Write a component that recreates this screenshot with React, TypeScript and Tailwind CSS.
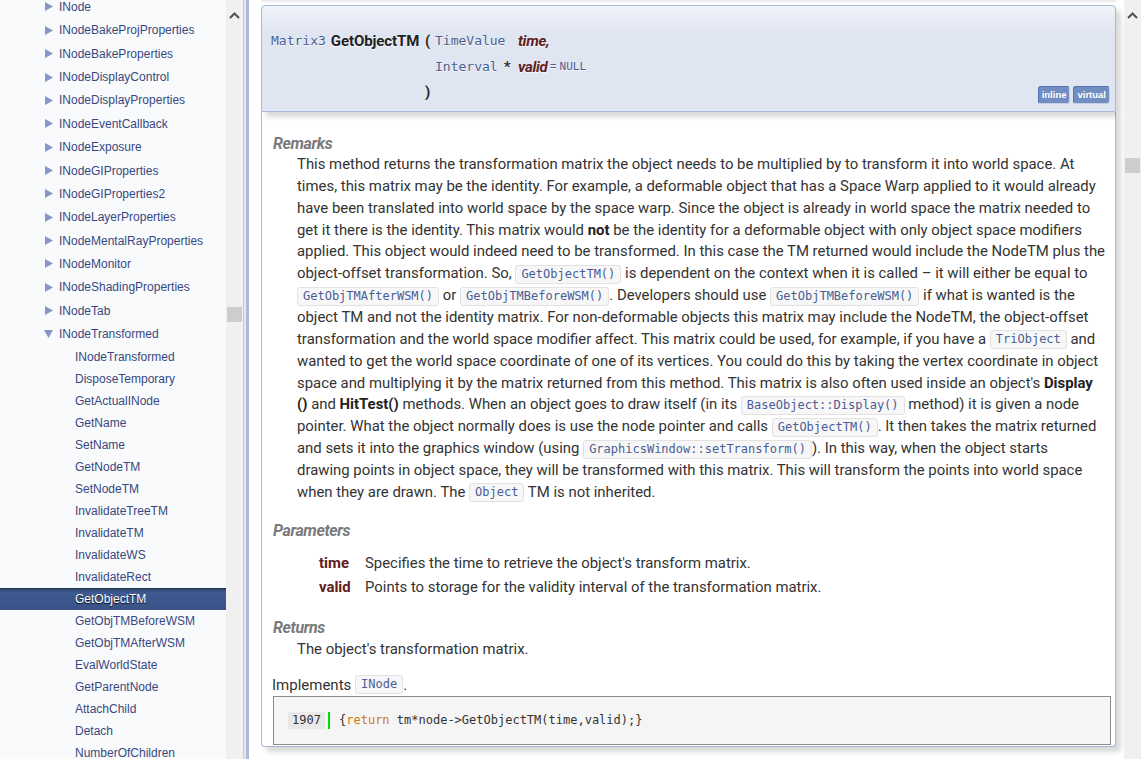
import React from "react";

const parents = [
  "INode",
  "INodeBakeProjProperties",
  "INodeBakeProperties",
  "INodeDisplayControl",
  "INodeDisplayProperties",
  "INodeEventCallback",
  "INodeExposure",
  "INodeGIProperties",
  "INodeGIProperties2",
  "INodeLayerProperties",
  "INodeMentalRayProperties",
  "INodeMonitor",
  "INodeShadingProperties",
  "INodeTab",
];

const children = [
  "INodeTransformed",
  "DisposeTemporary",
  "GetActualINode",
  "GetName",
  "SetName",
  "GetNodeTM",
  "SetNodeTM",
  "InvalidateTreeTM",
  "InvalidateTM",
  "InvalidateWS",
  "InvalidateRect",
  "GetObjectTM",
  "GetObjTMBeforeWSM",
  "GetObjTMAfterWSM",
  "EvalWorldState",
  "GetParentNode",
  "AttachChild",
  "Detach",
  "NumberOfChildren",
];

function C({ children }: { children: React.ReactNode }) {
  return (
    <code className="inline-block rounded-[3px] border border-[#e2e2e2] bg-[#f7f7f7] px-[5px] align-middle font-['DejaVu_Sans_Mono',monospace] text-[12px] leading-[17px] text-[#4a5d96]">
      {children}
    </code>
  );
}

function B({ children }: { children: React.ReactNode }) {
  return <b className="font-bold text-[#222]">{children}</b>;
}

function Chevron() {
  return (
    <svg width="11" height="7" viewBox="0 0 11 7" className="block">
      <polyline points="1,6 5.5,1.5 10,6" fill="none" stroke="#505050" strokeWidth="2" />
    </svg>
  );
}

function Scrollbar({ thumbTop }: { thumbTop: number }) {
  return (
    <div className="flex h-full w-[17px] shrink-0 flex-col items-center bg-[#f0f0f0]">
      <div className="mt-[12px]">
        <Chevron />
      </div>
      <div className="w-[15px] bg-[#cdcdcd]" style={{ marginTop: thumbTop - 19, height: 15 }} />
    </div>
  );
}

const lines: React.ReactNode[] = [
  <>This method returns the transformation matrix the object needs to be multiplied by to transform it into world space. At</>,
  <>times, this matrix may be the identity. For example, a deformable object that has a Space Warp applied to it would already</>,
  <>have been translated into world space by the space warp. Since the object is already in world space the matrix needed to</>,
  <>get it there is the identity. This matrix would <B>not</B> be the identity for a deformable object with only object space modifiers</>,
  <>applied. This object would indeed need to be transformed. In this case the TM returned would include the NodeTM plus the</>,
  <>object-offset transformation. So, <C>GetObjectTM()</C> is dependent on the context when it is called – it will either be equal to</>,
  <><C>GetObjTMAfterWSM()</C> or <C>GetObjTMBeforeWSM()</C>. Developers should use <C>GetObjTMBeforeWSM()</C> if what is wanted is the</>,
  <>object TM and not the identity matrix. For non-deformable objects this matrix may include the NodeTM, the object-offset</>,
  <>transformation and the world space modifier affect. This matrix could be used, for example, if you have a <C>TriObject</C> and</>,
  <>wanted to get the world space coordinate of one of its vertices. You could do this by taking the vertex coordinate in object</>,
  <>space and multiplying it by the matrix returned from this method. This matrix is also often used inside an object's <B>Display</B></>,
  <><B>()</B> and <B>HitTest()</B> methods. When an object goes to draw itself (in its <C>BaseObject::Display()</C> method) it is given a node</>,
  <>pointer. What the object normally does is use the node pointer and calls <C>GetObjectTM()</C>. It then takes the matrix returned</>,
  <>and sets it into the graphics window (using <C>GraphicsWindow::setTransform()</C>). In this way, when the object starts</>,
  <>drawing points in object space, they will be transformed with this matrix. This will transform the points into world space</>,
  <>when they are drawn. The <C>Object</C> TM is not inherited.</>,
];

function Heading({ children }: { children: React.ReactNode }) {
  return (
    <div className="h-[21px] pl-[11px] text-[16px] font-bold italic leading-[21px] tracking-[-0.4px] text-[#7a7a7a]">
      {children}
    </div>
  );
}

const badge =
  "rounded-[3px] border-t border-l border-t-[#5373b4] border-l-[#5373b4] border-r border-b border-r-[#c4cfe5] border-b-[#c4cfe5] bg-[#728dc1] px-[3px] py-[3px]";

export default function App() {
  const mono = "font-['DejaVu_Sans_Mono',monospace]";
  return (
    <div className="flex h-[759px] w-[1141px] overflow-hidden bg-white">
      {/* Sidebar */}
      <div className="h-full w-[226px] shrink-0 overflow-hidden bg-[#f9fafc] font-['Liberation_Sans',Arial,sans-serif] text-[12px] text-[#38487f]">
        <div className="mt-[-4.7px]">
          {parents.map((p) => (
            <div key={p} className="flex h-[23.36px] items-center pl-[45px]">
              <svg width="8" height="9" viewBox="0 0 8 9" className="shrink-0">
                <polygon points="0,0 8,4.5 0,9" fill="#8597c8" />
              </svg>
              <span className="ml-[6px] whitespace-nowrap">{p}</span>
            </div>
          ))}
          <div className="flex h-[23.36px] items-center pl-[44px]">
            <svg width="9" height="8" viewBox="0 0 9 8" className="shrink-0">
              <polygon points="0,0 9,0 4.5,8" fill="#8597c8" />
            </svg>
            <span className="ml-[6px] whitespace-nowrap">INodeTransformed</span>
          </div>
          {children.map((c) =>
            c === "GetObjectTM" ? (
              <div
                key={c}
                className="flex h-[22px] items-center bg-[linear-gradient(180deg,#1f2d4c_0px,#34507f_2px,#3e5a91_5px,#3a5387_100%)] pl-[75px] text-white [text-shadow:0_1px_1px_rgba(0,0,0,0.9)]"
              >
                {c}
              </div>
            ) : (
              <div key={c} className="flex h-[22px] items-center whitespace-nowrap pl-[75px]">
                {c}
              </div>
            )
          )}
        </div>
      </div>

      <Scrollbar thumbTop={307} />

      {/* splitter */}
      <div className="flex h-full w-[6px] shrink-0">
        <div className="w-[1px] bg-[#c6c8d0]" />
        <div className="w-[2px] bg-[#e2e8f4]" />
        <div className="w-[3px] bg-[#abbadb]" />
      </div>

      {/* Content */}
      <div className="h-full min-w-0 flex-1 overflow-hidden bg-white pr-[8px] pl-[12px] font-['Roboto',sans-serif] text-[#333]">
        <div className="h-[3px] bg-[linear-gradient(180deg,#e6e6e6,#ffffff)]" />
        <div className="mt-[2px]">
          {/* memproto */}
          <div className="relative h-[107px] rounded-t-[4px] border border-[#a8b8d9] bg-[linear-gradient(180deg,#f1f4f9_0px,#e7ecf5_14px,#dfe5f1_28px,#dfe5f1_100%)] pl-[9px] pr-[5px] shadow-[5px_5px_5px_rgba(0,0,0,0.15)] [text-shadow:0_1px_1px_rgba(255,255,255,0.9)]">
            <div className="flex h-full items-end justify-between pb-[6px]">
              <div className="grid grid-cols-[154px_10px_83px_auto] grid-rows-[26px_26px_25px] items-center">
                <div className="flex items-center whitespace-nowrap">
                  <span className={`${mono} text-[13px] text-[#4c5f8f]`}>Matrix3</span>
                  <span className="ml-[5px] text-[15px] font-bold tracking-[-0.1px] text-[#222]">GetObjectTM</span>
                </div>
                <div className="text-[15px] font-bold text-[#222]">(</div>
                <div className={`${mono} text-[13px] text-[#4c5f8f]`}>TimeValue</div>
                <div className="whitespace-nowrap text-[15px] font-bold italic tracking-[-0.3px] text-[#602020]">time,</div>

                <div />
                <div />
                <div className="flex items-center whitespace-nowrap">
                  <span className={`${mono} text-[13px] text-[#4c5f8f]`}>Interval</span>
                  <span className="ml-[6px] text-[15px] font-bold text-[#333]">*</span>
                </div>
                <div className="flex items-center whitespace-nowrap">
                  <span className="text-[15px] font-bold italic tracking-[-0.3px] text-[#602020]">valid</span>
                  <span className="ml-[2px] text-[13px] text-[#4c5f8f]">=</span>
                  <span className={`${mono} ml-[3px] text-[11px] text-[#4c5f8f]`}>NULL</span>
                </div>

                <div />
                <div className="text-[15px] font-bold text-[#222]">)</div>
                <div />
                <div />
              </div>
              <div className="mb-[1px] flex gap-[3px] font-['Liberation_Sans',Arial,sans-serif] text-[9.5px] font-bold leading-[10px] text-white [text-shadow:none]">
                <span className={badge}>inline</span>
                <span className={badge}>virtual</span>
              </div>
            </div>
          </div>

          {/* memdoc */}
          <div className="rounded-b-[4px] border border-t-0 border-[#a8b8d9] bg-white pt-[21px] pb-[1px] shadow-[5px_5px_5px_rgba(0,0,0,0.15)]">
            <Heading>Remarks</Heading>
            <div className="pl-[35px] text-[14.9px]">
              {lines.map((l, i) => (
                <div key={i} className="h-[21.87px] whitespace-nowrap leading-[21.87px]">
                  {l}
                </div>
              ))}
            </div>

            <div className="mt-[16px]">
              <Heading>Parameters</Heading>
            </div>
            <div className="mt-[10px] pl-[57px] text-[14.9px]">
              <div className="flex h-[24px] items-center">
                <span className="w-[46px] font-bold text-[#602020]">time</span>
                <span>Specifies the time to retrieve the object's transform matrix.</span>
              </div>
              <div className="flex h-[24px] items-center">
                <span className="w-[46px] font-bold text-[#602020]">valid</span>
                <span>Points to storage for the validity interval of the transformation matrix.</span>
              </div>
            </div>

            <div className="mt-[18px]">
              <Heading>Returns</Heading>
            </div>
            <div className="h-[22px] pl-[35px] text-[14.9px] leading-[22px]">The object's transformation matrix.</div>

            <div className="mt-[14px] flex h-[22px] items-center pl-[10px] text-[15px]">
              Implements&nbsp;<C>INode</C>.
            </div>

            <div className="mr-[4px] ml-[11px] flex h-[49px] items-center border border-[#8c8c8c] bg-[#f5f5f5] pl-[14px]">
              <div className={`${mono} flex items-center text-[12px] text-[#333]`}>
                <span className="w-[37px] bg-[#e8e8e8] pr-[4px] text-right leading-[17px]">1907</span>
                <span className="ml-[3px] h-[17px] w-[2px] bg-[#00e000]" />
                <span className="ml-[9px] whitespace-pre leading-[17px]">
                  {"{"}
                  <span className="text-[#d07a10]">return</span>
                  {" tm*node->GetObjectTM(time,valid);}"}
                </span>
              </div>
            </div>
          </div>
        </div>
      </div>

      <Scrollbar thumbTop={158} />
    </div>
  );
}
